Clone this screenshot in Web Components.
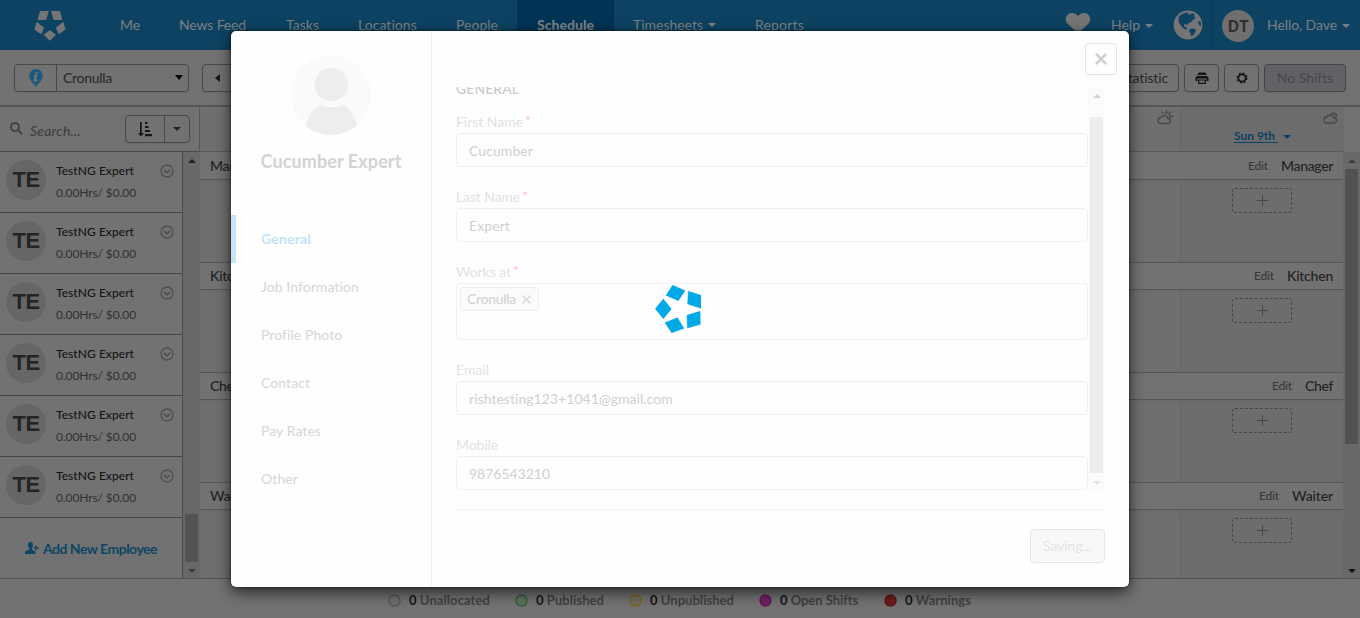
<!DOCTYPE html>
<html lang="en">
<head>
<meta charset="utf-8">
<title>Schedule</title>
<style>
html,body{margin:0;height:100%;overflow:hidden}
body{font-family:Lato,"Liberation Sans",sans-serif;font-size:14px;color:#222;background:#727272}
</style>
</head>
<body>
<schedule-app></schedule-app>
<script>
const define = (name, html, setup) => {
  const template = document.createElement('template');
  template.innerHTML = html;
  customElements.define(name, class extends HTMLElement {
    connectedCallback() {
      if (this.shadowRoot) return;
      const root = this.attachShadow({ mode: 'open' });
      root.append(template.content.cloneNode(true));
      if (setup) setup(this, root);
    }
  });
};
const reset = '*{box-sizing:border-box}svg{display:block;flex:none}';

/* Text set to an exact measure with tracking */
define('fit-text', `<style>:host{display:inline-block;white-space:nowrap;flex:none}</style><slot></slot>`, el => {
  const w = parseFloat(el.getAttribute('w'));
  const n = el.textContent.length;
  if (!w) return;
  const natural = el.getBoundingClientRect().width;
  el.style.letterSpacing = ((w - natural) / n).toFixed(3) + 'px';
});

define('ui-caret', `<style>:host{display:inline-block;flex:none;width:0;height:0;border:4px solid transparent;border-top-color:currentColor;border-bottom:0}
:host([up]){border-bottom:4px solid currentColor;border-top:0}</style>`);

define('scroll-bar', `<style>${reset}
:host{display:flex;flex-direction:column;align-items:center;width:17px;flex:none;background:var(--track);min-height:0;overflow:hidden}
ui-caret{margin:7px 0 6px}.b{margin-bottom:5px}
.a{color:var(--up)}.b{color:var(--down)}
.space{height:var(--before,0px);flex:none}.thumb{width:13px;height:var(--size);background:var(--thumb);flex:none}.grow{flex:1}
</style><ui-caret class="a" up></ui-caret><div class="space"></div><div class="thumb"></div><div class="grow"></div><ui-caret class="b"></ui-caret>`);

define('nav-item', `<style>${reset}
:host{display:flex;align-items:center;height:50px;padding:0 0 2px 20px;flex:none;gap:5px;box-sizing:border-box}
:host([active]){background:#003354;font-weight:900}
</style><slot></slot>`);

define('top-nav', `<style>${reset}
:host{display:flex;height:50px;background:#0d4262;color:#7a8083;font-size:14px}
.logo{width:100px;padding:10px 0 0 33px}
.right{margin-left:auto;display:flex;align-items:center}
.right ui-caret{margin:2px 0 0 5px}.right>fit-text{margin-bottom:2px}
.heart{margin:-3px 20px 0 0}.globe{margin-left:20px}
.rule{width:1px;height:50px;background:#0a3753;margin:0 10px 0 8px}
.dt{width:32px;height:32px;border-radius:50%;background:#6f6f6f;color:#303030;font:bold 16px/33px "Open Sans",sans-serif;text-align:center;margin:2px 13px 0 0}
</style>
<div class="logo"><svg width="34" height="32" viewBox="33 10 34 32" fill="#757575"><path d="M40 11h8.700l-2.200 8.200-1 .8h-8zM51.200 11H60l2.300 9h-8l-1-.8zM36.600 21.800l7.600 6-3 6.400-6.800-4.400zM63.300 21.800l-7.500 6 3 6.400 6.700-4.600zM49.800 30.200l6.200 4.600-6.200 6-6.200-6z"/></svg></div>
<nav-item style="width:59px"><fit-text w="20">Me</fit-text></nav-item>
<nav-item style="width:107px"><fit-text w="67">News Feed</fit-text></nav-item>
<nav-item style="width:72px"><fit-text w="33">Tasks</fit-text></nav-item>
<nav-item style="width:98px"><fit-text w="59">Locations</fit-text></nav-item>
<nav-item style="width:81px"><fit-text w="42">People</fit-text></nav-item>
<nav-item style="width:97px" active><fit-text w="57">Schedule</fit-text></nav-item>
<nav-item style="width:121px;padding-left:19px"><fit-text w="70">Timesheets</fit-text><ui-caret style="margin-top:2px"></ui-caret></nav-item>
<nav-item><fit-text w="49">Reports</fit-text></nav-item>
<div class="right">
<svg class="heart" width="26" height="23" viewBox="0 0 26 23" fill="#757575"><path d="M13 21.500 2.400 11.600C.2 9 .2 5 2.400 2.900 5.200.2 10.300.5 13 4c2.700-3.500 7.800-3.800 10.600-1.100 2.200 2.100 2.200 6.100 0 8.700z"/></svg>
<fit-text w="29">Help</fit-text><ui-caret></ui-caret>
<svg class="globe" width="30" height="30" viewBox="0 0 30 30"><circle cx="15" cy="15" r="14.400" fill="#757575"/><g fill="#0d4262"><path d="M6 6.500c2-2 4.500-3.500 7.500-4l2 .5-.5 2 2.500-.8 1.500-1 3 1-1 1.500 1.500 2.500-2.500 1.500-2 2.500-2.500.8-1 3-1-2-2.500.5.500 2.500 2 .2.500 2.500-3-1-3.500-3.500-2-4zM17 19l4-.5 2 2-1 2.500-2.500 2.500-1.800.5-.2-3-1.500-2zM25 11l3 1v4l-2-1z"/></g></svg>
<div class="rule"></div>
<div class="dt"><fit-text w="21">DT</fit-text></div>
<fit-text w="70">Hello, Dave</fit-text><ui-caret style="margin-right:10px"></ui-caret>
</div>`);

define('tool-button', `<style>${reset}
:host{display:flex;align-items:center;justify-content:center;height:28px;border:1px solid #494949;border-radius:4px;flex:none;box-sizing:border-box;box-shadow:0 1px 1px #6262627a}
:host([off]){background:#606265;color:#484848;border-color:#454545}
:host([left]){justify-content:flex-start}
</style><slot></slot>`);

define('tool-bar', `<style>${reset}
:host{display:flex;align-items:center;height:57px;padding:0 14px;border-bottom:2px solid #565656;box-sizing:border-box;color:#262626}
.pin{width:42px;height:26px;border-right:1px solid #494949;display:flex;align-items:center;justify-content:center}
.name{margin-left:6px}.pick{margin-left:auto;margin-right:5px;border-width:5.500px 4px 0;color:#000}
.right{margin-left:auto;display:flex;gap:5px}
</style>
<tool-button left style="width:175px"><div class="pin"><svg width="14" height="18" viewBox="0 0 14 18"><path d="M7 0a6.700 6.700 0 0 1 6.700 6.800C13.700 11 10 14 7 18 4 14 .3 11 .3 6.800A6.700 6.700 0 0 1 7 0z" fill="#1f587e"/><path d="M6.600 3.200h2.300l-.5 2H6.100zM5 6h3.200L7.100 11h1.200l-.3 1.200H4.600L5.700 7.200H4.700z" fill="#777"/></svg></div><fit-text class="name" w="49">Cronulla</fit-text><ui-caret class="pick"></ui-caret></tool-button>
<tool-button left style="width:60px;margin-left:13px;padding-left:12px"><svg width="5" height="8" viewBox="0 0 5 8"><path d="M5 0v8L0 4z" fill="#181818"/></svg></tool-button>
<div class="right">
<tool-button style="width:82px;justify-content:flex-end;padding-right:10px"><fit-text w="48">Statistic</fit-text></tool-button>
<tool-button style="width:35px"><svg width="14" height="12" viewBox="0 0 14 12"><path fill="#151515" d="M4 .5h6l1.500 1.500v1h-9V2zM2 4h10l1.500 1.500V9h-2V6.500h-9V9h-2V5.500zM3 7.500h8V12H3zM4.300 8.500v2.200h5.400V8.500z" fill-rule="evenodd"/></svg></tool-button>
<tool-button style="width:35px"><svg width="12" height="12" viewBox="0 0 12 12"><circle cx="6" cy="6" r="3.600" fill="none" stroke="#151515" stroke-width="1.800"/><circle cx="6" cy="6" r="4.800" fill="none" stroke="#151515" stroke-width="1.600" stroke-dasharray="1.880 1.890"/></svg></tool-button>
<tool-button off style="width:82px"><fit-text w="56">No Shifts</fit-text></tool-button>
</div>`);

define('employee-row', `<style>${reset}
:host{display:flex;height:61px;border-bottom:1px solid #454545;padding:8px 7px 0 6px;box-sizing:border-box}
.av{width:40px;height:40px;border-radius:50%;background:#666;color:#242424;font:bold 22px/40px "Liberation Sans",sans-serif;text-align:center;flex:none}
.t{margin-left:10px;flex:1}
.n{font-size:12px;line-height:16px;margin-top:3px;color:#151515;font-weight:500}.h{font-size:12px;line-height:16px;margin-top:6px;color:#303030}
svg{margin:4px 1px 0 0}
</style><div class="av"><fit-text w="27">TE</fit-text></div><div class="t"><div class="n"><fit-text w="78">TestNG Expert</fit-text></div><div class="h"><fit-text w="80">0.00Hrs/ $0.00</fit-text></div></div>
<svg width="14" height="14" viewBox="0 0 14 14" fill="none" stroke="#505050"><circle cx="7" cy="7" r="6" stroke-width="1.300"/><path d="M4 5.800l3 3 3-3" stroke-width="1.700"/></svg>`);

define('staff-panel', `<style>${reset}
:host{display:flex;flex-direction:column;width:200px;flex:none;height:471px}
.search{display:flex;height:45px;flex:none;border-right:1px solid #575757;border-bottom:1px solid #494949;padding:8px 9px 0 10px}
.search i{font-size:14px;color:#3c3c3c;margin:7px 0 0 7px}
.search>svg{margin-top:7px}
tool-button{margin-left:auto}.c{width:25px;height:26px;border-left:1px solid #494949;display:flex;align-items:center;justify-content:center}
.s{width:38px;display:flex;justify-content:center}
.body{display:flex;flex:1;min-height:0}.list{width:183px;border-right:1px solid #494949}
.add{display:flex;align-items:center;height:60px;padding-left:25px;gap:4px;color:#0d4565;font-weight:700}
scroll-bar{--track:#686868;--thumb:#535353;--size:48px;--before:345px;--up:#222;--down:#3c3c3c}
</style>
<div class="search"><svg width="13" height="13" viewBox="0 0 13 13" fill="none" stroke="#424242" stroke-width="1.900"><circle cx="5" cy="5" r="4"/><path d="M8 8l4 4"/></svg><i><fit-text w="51">Search...</fit-text></i>
<tool-button style="width:65px"><div class="s"><svg width="14" height="15" viewBox="0 0 14 15" fill="#151515"><path d="M2 0h1.700v11H6L2.900 14.500 0 11h2zM7 0h2.500v2H7zM7 4h3.500v2H7zM7 8h5v2H7zM7 12h7v2.200H7z"/></svg></div><div class="c"><ui-caret></ui-caret></div></tool-button></div>
<div class="body"><div class="list"><employee-row></employee-row><employee-row></employee-row><employee-row></employee-row><employee-row></employee-row><employee-row></employee-row><employee-row></employee-row>
<div class="add"><svg width="14" height="12" viewBox="0 0 14 12" fill="#0d4565"><path d="M5.500 0C7.300 0 8 1.300 8 3c0 1.500-.6 2.600-1.200 3.200V7.500C8 8.500 10.500 8.600 10.500 10.500V12H0v-1.500C0 8.600 3 8.500 4.200 7.500V6.200C3.500 5.600 3 4.500 3 3c0-1.700.7-3 2.500-3z"/><path d="M10.300 3.300h1.400v2H14v1.300h-2.300v2h-1.400v-2H8.500V5.300h1.800z"/></svg><fit-text w="114">Add New Employee</fit-text></div></div><scroll-bar></scroll-bar></div>`);

define('shift-section', `<style>${reset}
:host{display:block;height:110px}
.head{height:28px;border:1px solid #565656;border-width:1px 0;display:flex;align-items:center;padding:0 10px 2px;background:#727272;color:#222;font-weight:500;box-shadow:0 2px 2px #6767675c;position:relative}
:host([first]) .head{border-top-color:#727272}
.edit{margin-left:auto;margin-right:13px;font-size:12px;color:#383838;font-weight:500}
.cells{display:flex;height:82px;background:#6f6f6f}
.wide{width:981px;flex:none;border-right:1px solid #666}.cell{flex:1;background:#6d6d6d;padding:8px 0 0 51px}
.add{width:60px;height:25px;border:1px dashed #484848;border-radius:3px;display:flex;align-items:center;justify-content:center}
</style><div class="head"><span class="l"></span><fit-text class="edit" w="20">Edit</fit-text><span class="r"></span></div>
<div class="cells"><div class="wide"></div><div class="cell"><div class="add"><svg width="11" height="11" viewBox="0 0 11 11" stroke="#44484d"><path d="M5.500 0v11M0 5.500h11"/></svg></div></div></div>`, (el, root) => {
  const make = w => { const t = document.createElement('fit-text'); t.textContent = el.getAttribute('name'); t.setAttribute('w', w); return t; };
  for (const s of ['.l', '.r']) root.querySelector(s).append(make(el.getAttribute('w')));
});

define('shift-board', `<style>${reset}
:host{display:flex;flex-direction:column;flex:1;height:471px;overflow:hidden}
.top{display:flex;height:45px;border-bottom:1px solid #5a5a5a;flex:none;width:1143px}
.wide{width:981px;flex:none;border-right:1px solid #666;background:#6f6f6f;padding:3px 6px;display:flex;justify-content:flex-end}
.day{flex:1;background:#6c6c6c;padding:3px 6px 0 53px}.day .w{margin-left:89px}
.date{display:flex;align-items:center;gap:5px;font-size:12px;font-weight:700;color:#0b4162;margin-top:4px}
.date span{border-bottom:1px solid #0b4162;height:14px;line-height:13px;display:block}
.date ui-caret{margin-top:2px}
.body{display:flex;flex:1;min-height:0}.rows{width:1143px;overflow:hidden}
scroll-bar{--track:#696969;--thumb:#525252;--size:275px;--before:0px;--up:#3c3c3c;--down:#151515}
</style>
<div class="top"><div class="wide"><svg width="17" height="15" viewBox="0 0 17 15" fill="none" stroke="#474747" stroke-width="1.300"><path d="M4 13.500a3 3 0 0 1-.2-6A4 4 0 0 1 11 8.500a2.500 2.500 0 0 1 0 5z"/><path d="M7 4.500A3.200 3.200 0 0 1 12.500 8M9.500 0v2M4.500 1.800l1.300 1.400M14.300 1.500L13 3M14 6.500h2.500"/></svg></div>
<div class="day"><svg class="w" width="15" height="15" viewBox="0 0 15 15" fill="none" stroke="#474747" stroke-width="1.300"><path d="M4 13a3 3 0 0 1-.2-6A4 4 0 0 1 11 8a2.500 2.500 0 0 1 0 5zM8 4.300C9 2.700 10 2.700 11 2.800c0 1.500 1 2 2.500 2 .2 1.200-.5 2.200-1.500 3"/></svg><div class="date"><span><fit-text w="44">Sun 9th&nbsp;</fit-text></span><ui-caret></ui-caret></div></div></div>
<div class="body"><div class="rows"><shift-section first name="Manager" w="52"></shift-section><shift-section name="Kitchen" w="46"></shift-section><shift-section name="Chef" w="28"></shift-section><shift-section name="Waiter" w="41"></shift-section></div><scroll-bar></scroll-bar></div>`);

define('legend-item', `<style>${reset}:host{display:flex;align-items:center;font-weight:700;font-size:13px;color:#404040}
svg{margin-right:8px}
</style><svg width="13" height="13" viewBox="0 0 13 13"><circle cx="6.500" cy="6.500" r="5.500" style="fill:var(--fill);stroke:var(--edge)" stroke-width="1.400"/></svg><slot></slot>`);
define('status-legend', `<style>${reset}
:host{display:flex;height:40px;border-top:1px solid #535353;box-sizing:border-box;padding:3px 0 0 388px}
b{color:#151515;font-weight:700}
</style>
<legend-item style="width:127px;--edge:#555;--fill:#6e6e6e"><fit-text w="81"><b>0</b> Unallocated</fit-text></legend-item>
<legend-item style="width:114px;--edge:#2f6132;--fill:#5f6e5f"><fit-text w="68"><b>0</b> Published</fit-text></legend-item>
<legend-item style="width:130px;--edge:#7d6412;--fill:#6e6c64"><fit-text w="84"><b>0</b> Unpublished</fit-text></legend-item>
<legend-item style="width:125px;--edge:#64185a;--fill:#701f61"><fit-text w="78"><b>0</b> Open Shifts</fit-text></legend-item>
<legend-item style="--edge:#5c1717;--fill:#701c1c"><fit-text w="66"><b>0</b> Warnings</fit-text></legend-item>`);

define('form-field', `<style>${reset}
:host{display:block;margin-bottom:21px}
.lab{height:17px;line-height:17px;margin-bottom:3px;color:#e2e2e2;display:flex}
em{font-style:normal;color:#ffc4c4;margin:-1px 0 0 2px}
:host(:not([required])) em{display:none}
.box{height:34px;border:1px solid #f0f0f0;border-radius:4px;display:flex;align-items:center;padding:0 12px;color:#d0d0d0}
:host([tags]) .box{height:57px;padding:3px;align-items:flex-start}
</style><div class="lab"><fit-text class="l"></fit-text><em>*</em></div><div class="box"><slot></slot></div>`, (el, root) => {
  const t = root.querySelector('.l');
  const fresh = document.createElement('fit-text');
  fresh.textContent = el.getAttribute('label');
  fresh.setAttribute('w', el.getAttribute('w'));
  t.replaceWith(fresh);
});

define('menu-item', `<style>${reset}
:host{display:flex;align-items:center;height:48px;padding:0 0 2px 25px;border-left:5px solid transparent;box-sizing:border-box;color:#d6d6d6}
:host([active]){border-color:#c5e4f7;color:#c3e3f6;font-weight:700}
</style><slot></slot>`);

define('profile-dialog', `<style>${reset}
:host{position:absolute;left:231px;top:31px;width:898px;height:556px;background:#fefefe;border-radius:5px;box-shadow:0 5px 15px #000a,0 0 3px #000a;display:flex;overflow:visible}
aside{width:201px;border-right:1px solid #f2f2f2;display:flex;flex-direction:column}
.avatar{margin:24px 0 0 60px}
h2{font-size:18px;line-height:24px;font-weight:700;color:#d3d3d3;margin:14px 0 42px;text-align:center}
main{flex:1;display:flex;flex-direction:column;padding:12px 12px 24px 24px;min-width:0}
.close{align-self:flex-end;width:32px;height:32px;border:1px solid #e4e4e4;border-radius:4px;display:flex;align-items:center;justify-content:center;margin-bottom:12px}
.scroll{height:403px;width:649px;display:flex;overflow:hidden}
.form{width:632px;margin-top:-8px}
h3{font-size:14px;line-height:19px;margin:0 0 15px;font-weight:500;color:#c9c9c9}
scroll-bar{--track:#fbfbfb;--thumb:#ededed;--size:356px;--before:13px;--up:#d2d2d2;--down:#e2e2e2}
.foot{width:649px;margin-top:19px;border-top:1px solid #f5f5f5;padding-top:19px;display:flex;justify-content:flex-end}
.save{width:75px;height:34px;border:1px solid #e4e6e8;border-radius:4px;background:#f7f8fa;color:#e4e4e4;display:flex;align-items:center;justify-content:center;padding-bottom:2px}
.tag{height:24px;border:1px solid #edefef;border-radius:4px;background:#fafbfb;padding:0 7px 2px 6px;display:flex;align-items:center;gap:6px}
.spin{position:absolute;left:423.500px;top:254px}
</style>
<aside><svg class="avatar" width="80" height="80" viewBox="0 0 80 80"><clipPath id="c"><circle cx="40" cy="40" r="40"/></clipPath><g clip-path="url(#c)"><rect width="80" height="80" fill="#fafafa"/><circle cx="40.500" cy="29.500" r="16.700" fill="#ededed"/><path d="M15 71c2-10 7-17 14-21 7 3 16 3 24 0 6 4 11 11 13 21v9H15z" fill="#ededed"/></g></svg>
<h2><fit-text w="141">Cucumber Expert</fit-text></h2>
<menu-item active><fit-text w="50">General</fit-text></menu-item>
<menu-item><fit-text w="98">Job Information</fit-text></menu-item>
<menu-item><fit-text w="81">Profile Photo</fit-text></menu-item>
<menu-item><fit-text w="49">Contact</fit-text></menu-item>
<menu-item><fit-text w="60">Pay Rates</fit-text></menu-item>
<menu-item><fit-text w="37">Other</fit-text></menu-item></aside>
<main><div class="close"><svg width="12" height="12" viewBox="0 0 12 12" stroke="#cfcfcf" stroke-width="2.500"><path d="M1 1l10 10M11 1L1 11"/></svg></div>
<div class="scroll"><div class="form"><h3><fit-text w="63">GENERAL</fit-text></h3>
<form-field label="First Name" w="67" required><fit-text w="64">Cucumber</fit-text></form-field>
<form-field label="Last Name" w="64" required><fit-text w="41">Expert</fit-text></form-field>
<form-field label="Works at" w="55" required tags><div class="tag"><fit-text w="49">Cronulla</fit-text><svg width="9" height="9" viewBox="0 0 9 9" stroke="#d4d4d4" stroke-width="1.400" style="margin-top:3px"><path d="M.5.5l8 8M8.500.5l-8 8"/></svg></div></form-field>
<form-field label="Email" w="33"><fit-text w="204">rishtesting123+1041@gmail.com</fit-text></form-field>
<form-field label="Mobile" w="42"><fit-text w="81">9876543210</fit-text></form-field></div><scroll-bar></scroll-bar></div>
<div class="foot"><div class="save"><fit-text w="49">Saving...</fit-text></div></div></main>
<svg class="spin" width="46.700" height="47.700" viewBox="644 134 140 143" fill="#00a8e6" stroke="#00a8e6" stroke-width="1.500" stroke-linejoin="round"><path d="M697 135l37 16-20 30-37-16zM744 153l38 12v39l-40-13zM740 225l39-12 1 39-39 11zM674 247l37-15 20 32-37 13zM669 176l24 30-24 29-24-30z"/></svg>`);

define('schedule-app', `<style>${reset}
:host{display:flex;flex-direction:column;width:1360px;height:618px;background:#727272}
.mid{display:flex;height:471px}
</style><top-nav></top-nav><tool-bar></tool-bar><div class="mid"><staff-panel></staff-panel><shift-board></shift-board></div><status-legend></status-legend><profile-dialog></profile-dialog>`);
</script>
</body>
</html>
